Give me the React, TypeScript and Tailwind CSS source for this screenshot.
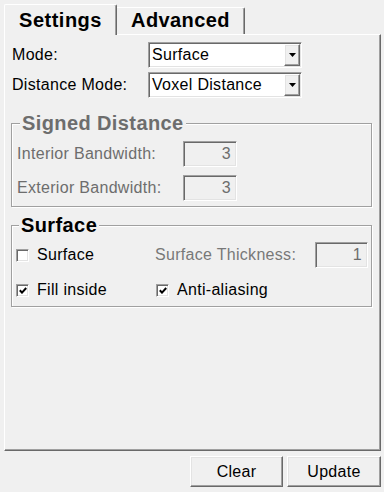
const sunken =
  "border border-t-[#a0a0a0] border-l-[#a0a0a0] border-b-white border-r-white shadow-[inset_1px_1px_0_#696969,inset_-1px_-1px_0_#e3e3e3]";
const raised =
  "border border-t-white border-l-white border-b-[#696969] border-r-[#696969] shadow-[inset_-1px_-1px_0_#a0a0a0,inset_1px_1px_0_#e3e3e3]";

function Combo({ value }: { value: string }) {
  return (
    <div className={`flex h-[26px] w-[154px] items-center bg-white ${sunken}`}>
      <span className="flex-1 pl-[3px] leading-none">{value}</span>
      <div className={`mr-px flex h-[22px] w-[16px] items-center justify-center bg-[#f0f0f0] ${raised}`}>
        <svg width="7" height="4" viewBox="0 0 7 4">
          <path d="M0 0h7L3.5 4z" fill="#000" />
        </svg>
      </div>
    </div>
  );
}

function Field({ value, w }: { value: string; w: string }) {
  return (
    <div className={`flex h-[26px] ${w} items-center justify-end bg-[#f0f0f0] pr-[5px] text-[#6d6d6d] ${sunken}`}>
      {value}
    </div>
  );
}

function Check({ checked, label }: { checked: boolean; label: string }) {
  return (
    <div className="flex items-center">
      <div className={`flex h-[13px] w-[13px] items-center justify-center bg-white ${sunken}`}>
        {checked && (
          <svg width="8" height="7" viewBox="0 0 8 7">
            <path d="M0.8 3.2l2.2 2.4L7.2 1" stroke="#000" strokeWidth="2" fill="none" />
          </svg>
        )}
      </div>
      <span className="ml-[8px]">{label}</span>
    </div>
  );
}

export default function App() {
  return (
    <div className="flex h-[492px] w-[384px] flex-col bg-[#f0f0f0] pl-[4px] pt-[4px] font-['Liberation_Sans',Arial,sans-serif] text-[16px] tracking-[0.3px] text-black">
      {/* Tabs */}
      <div className="flex h-[30px] items-start">
        <div className="relative z-10 flex h-[31px] w-[113px] justify-center rounded-t-[2px] border-l border-t border-r border-l-white border-t-white border-r-[#696969] bg-[#f0f0f0] pt-[5px] text-[20px] font-bold leading-[20px] tracking-[0.5px] shadow-[inset_-1px_0_0_#a0a0a0]">
          Settings
        </div>
        <div className="mt-[3px] flex h-[27px] w-[128px] justify-center rounded-tr-[2px] border-t border-r border-t-white border-r-[#696969] pt-[2px] text-[20px] font-bold leading-[20px] tracking-[0.4px] shadow-[inset_-1px_0_0_#a0a0a0]">
          Advanced
        </div>
      </div>

      {/* Tab page */}
      <div className="flex h-[417px] w-[377px] flex-col border border-l-white border-t-white border-b-[#696969] border-r-[#696969] pt-[7px] shadow-[inset_-1px_-1px_0_#a0a0a0]">
        <div className="flex h-[26px] items-center pl-[7px]">
          <span className="w-[136px]">Mode:</span>
          <Combo value="Surface" />
        </div>
        <div className="mt-[4px] flex h-[26px] items-center pl-[7px]">
          <span className="w-[136px]">Distance Mode:</span>
          <Combo value="Voxel Distance" />
        </div>

        <fieldset className="ml-[6px] mt-[15px] w-[361px] border border-[#a0a0a0] shadow-[inset_1px_1px_0_#fff,1px_1px_0_#fff]">
          <legend className="ml-[8px] bg-[#f0f0f0] px-[2px] text-[20px] font-bold leading-[20px] tracking-[0.4px] text-[#6d6d6d]">
            Signed Distance
          </legend>
          <div className="flex flex-col gap-[8px] pb-[5px] pl-[5px] pt-[8px] text-[#6d6d6d]">
            <div className="flex h-[26px] items-center">
              <span className="w-[166px]">Interior Bandwidth:</span>
              <Field value="3" w="w-[54px]" />
            </div>
            <div className="flex h-[26px] items-center">
              <span className="w-[166px]">Exterior Bandwidth:</span>
              <Field value="3" w="w-[54px]" />
            </div>
          </div>
        </fieldset>

        <fieldset className="ml-[6px] mt-[8px] w-[361px] border border-[#a0a0a0] shadow-[inset_1px_1px_0_#fff,1px_1px_0_#fff]">
          <legend className="ml-[7px] bg-[#f0f0f0] px-[2px] text-[20px] font-bold leading-[20px] tracking-[0.4px]">
            Surface
          </legend>
          <div className="flex flex-col gap-[9px] pb-[3px] pl-[4px] pr-[3px] pt-[7px]">
            <div className="flex h-[26px] items-center">
              <div className="w-[139px]">
                <Check checked={false} label="Surface" />
              </div>
              <span className="flex-1 text-[#787878]">Surface Thickness:</span>
              <Field value="1" w="w-[53px]" />
            </div>
            <div className="flex h-[26px] items-center">
              <div className="w-[140px]">
                <Check checked label="Fill inside" />
              </div>
              <Check checked label="Anti-aliasing" />
            </div>
          </div>
        </fieldset>
      </div>

      {/* Buttons */}
      <div className="mt-[5px] flex w-[377px] justify-end gap-[4px]">
        <button className={`h-[31px] w-[93px] bg-[#f0f0f0] ${raised}`}>Clear</button>
        <button className={`h-[31px] w-[94px] bg-[#f0f0f0] ${raised}`}>Update</button>
      </div>
    </div>
  );
}
